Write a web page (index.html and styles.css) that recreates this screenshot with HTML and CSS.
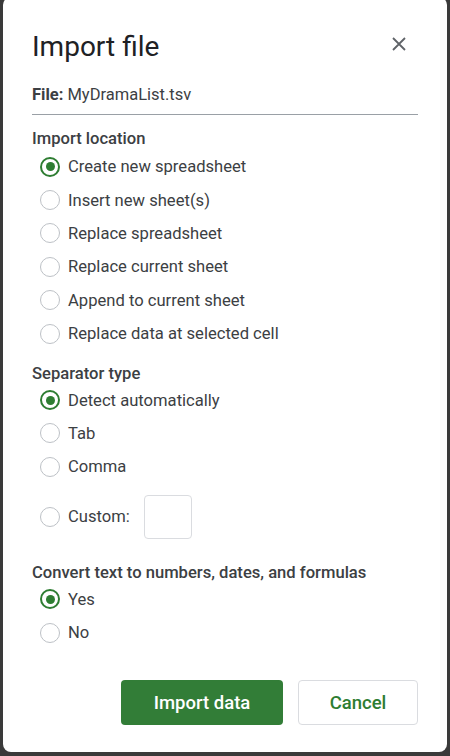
FILE: index.html
```html
<!DOCTYPE html>
<html>
<head>
<meta charset="utf-8">
<link rel="stylesheet" href="styles.css">
</head>
<body>
<div class="dialog">
  <div class="header">
    <div class="title">Import file</div>
    <div class="close">
      <svg width="14" height="14" viewBox="0 0 14 14"><path d="M1 1 L13 13 M13 1 L1 13" stroke="#5f6368" stroke-width="1.8" fill="none"/></svg>
    </div>
  </div>
  <div class="file"><b>File:</b> MyDramaList.tsv</div>

  <div class="heading first">Import location</div>
  <div class="row"><span class="radio on"></span><span>Create new spreadsheet</span></div>
  <div class="row"><span class="radio"></span><span>Insert new sheet(s)</span></div>
  <div class="row"><span class="radio"></span><span>Replace spreadsheet</span></div>
  <div class="row"><span class="radio"></span><span>Replace current sheet</span></div>
  <div class="row"><span class="radio"></span><span>Append to current sheet</span></div>
  <div class="row"><span class="radio"></span><span>Replace data at selected cell</span></div>

  <div class="heading sep">Separator type</div>
  <div class="row"><span class="radio on"></span><span>Detect automatically</span></div>
  <div class="row"><span class="radio"></span><span>Tab</span></div>
  <div class="row"><span class="radio"></span><span>Comma</span></div>
  <div class="row custom"><span class="radio"></span><span>Custom:</span><span class="box"></span></div>

  <div class="heading convert">Convert text to numbers, dates, and formulas</div>
  <div class="row"><span class="radio on"></span><span>Yes</span></div>
  <div class="row"><span class="radio"></span><span>No</span></div>

  <div class="buttons">
    <div class="btn primary">Import data</div>
    <div class="btn secondary">Cancel</div>
  </div>
</div>
</body>
</html>
```

FILE: styles.css
```css
html, body {
  margin: 0;
  padding: 0;
}
body {
  background: #3a3a3a;
  width: 450px;
  height: 756px;
  overflow: hidden;
  font-family: Roboto, "Liberation Sans", sans-serif;
  color: #3c4043;
}
.dialog {
  margin-left: 3px;
  margin-top: -3px;
  width: 444px;
  height: 755px;
  background: #fff;
  border-radius: 8px;
  box-sizing: border-box;
  padding: 0 29px;
  display: flex;
  flex-direction: column;
}
.header {
  padding-top: 32px;
  height: 36px;
  display: flex;
  align-items: center;
  justify-content: space-between;
}
.title {
  font-size: 28px;
  line-height: 36px;
  color: #202124;
  font-weight: 400;
}
.close {
  width: 24px;
  height: 24px;
  margin-right: 7px;
  display: flex;
  align-items: center;
  justify-content: center;
  margin-top: -6px;
}
.file {
  margin-top: 20px;
  font-size: 16.5px;
  line-height: 20px;
  padding-bottom: 9px;
  border-bottom: 1px solid #9aa0a6;
  color: #3c4043;
}
.file b {
  font-weight: 700;
}
.heading {
  margin-top: 12px;
  font-size: 16.6px;
  font-weight: 500;
  line-height: 22px;
  color: #3c4043;
}
.heading.first {
  margin-top: 13px;
}
.heading.sep {
  margin-top: 13px;
  margin-bottom: -2px;
}
.heading.convert {
  margin-top: 22px;
  margin-bottom: -1px;
}
.row {
  height: 33.4px;
  display: flex;
  align-items: center;
  font-size: 16.6px;
  color: #3c4043;
}
.radio {
  width: 20px;
  height: 20px;
  box-sizing: border-box;
  border-radius: 50%;
  border: 1px solid #bdc1c6;
  margin-left: 8px;
  margin-right: 8px;
  flex: none;
  display: flex;
  align-items: center;
  justify-content: center;
}
.radio.on {
  border: 2.5px solid #2e7d32;
}
.radio.on::after {
  content: "";
  width: 9px;
  height: 9px;
  border-radius: 50%;
  background: #2e7d32;
}
.row.custom {
  margin-top: 10px;
  height: 46px;
}
.box {
  width: 48px;
  height: 44px;
  box-sizing: border-box;
  border: 1px solid #dadce0;
  border-radius: 4px;
  margin-left: 14px;
}
.buttons {
  margin-top: 31px;
  display: flex;
  justify-content: flex-end;
  gap: 15px;
}
.btn {
  height: 45px;
  box-sizing: border-box;
  border-radius: 4px;
  display: flex;
  align-items: center;
  justify-content: center;
  font-size: 18.5px;
  font-weight: 500;
}
.primary {
  width: 162px;
  background: #327d37;
  color: #fff;
}
.secondary {
  width: 120px;
  border: 1px solid #dadce0;
  color: #2e7d32;
}
```
